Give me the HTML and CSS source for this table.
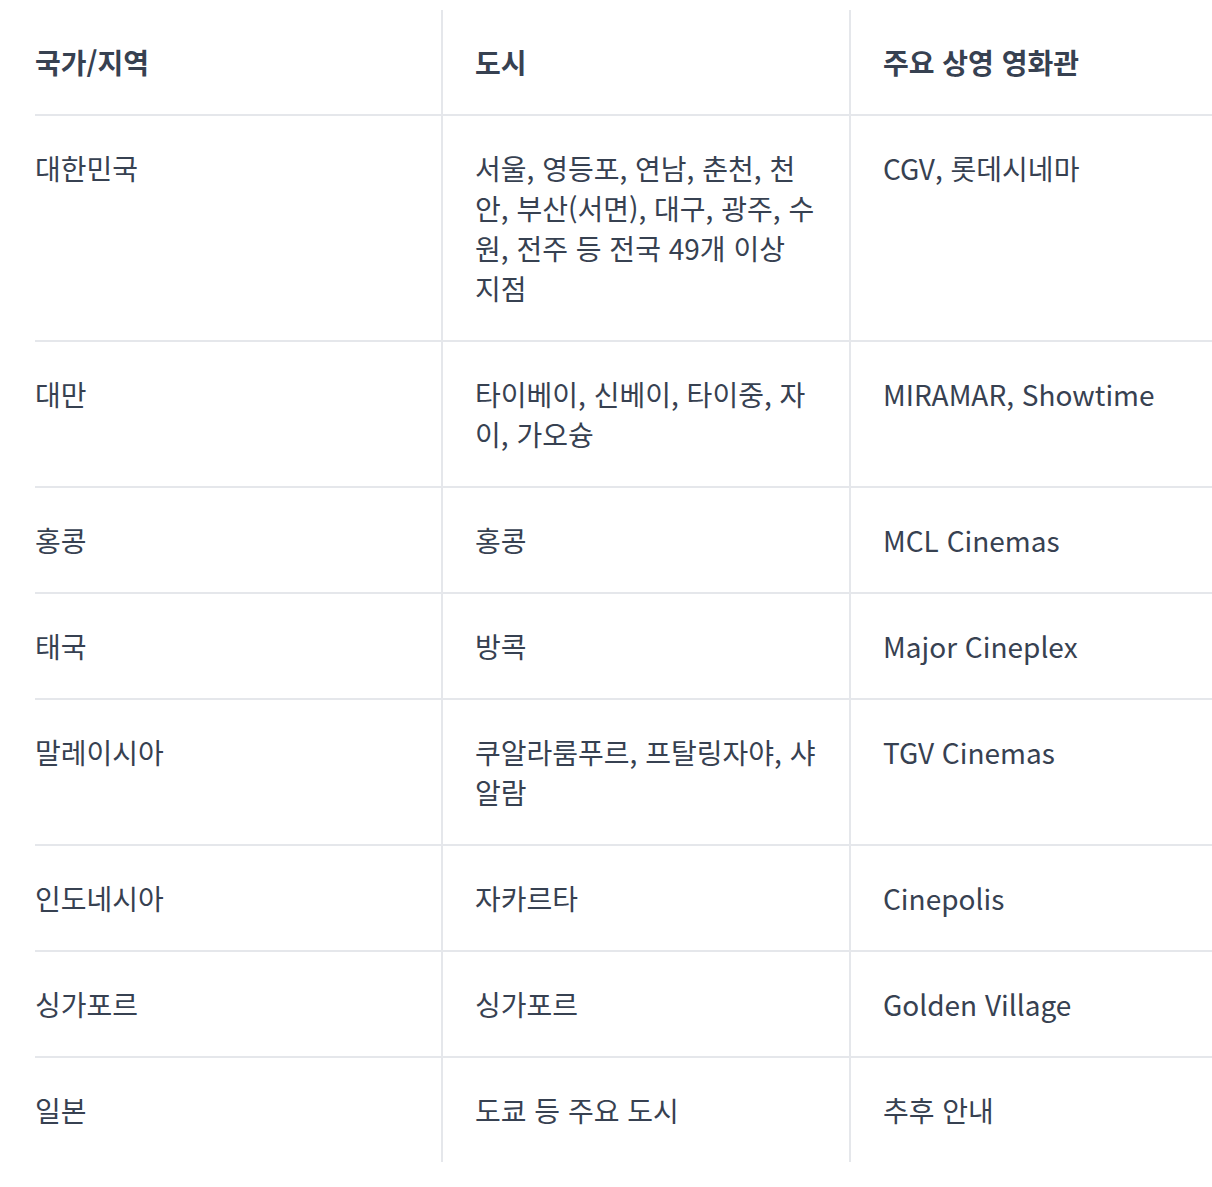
FILE: index.html
```html
<!DOCTYPE html>
<html lang="ko">
<head>
<meta charset="utf-8">
<link rel="stylesheet" href="styles.css">
</head>
<body>
<div class="wrap">
<table class="cinemas">
<colgroup><col class="c1"><col class="c2"><col class="c3"></colgroup>
<thead>
<tr><th>국가/지역</th><th>도시</th><th>주요 상영 영화관</th></tr>
</thead>
<tbody>
<tr><td>대한민국</td><td>서울, 영등포, 연남, 춘천, 천안, 부산(서면), 대구, 광주, 수원, 전주 등 전국 49개 이상 지점</td><td>CGV, 롯데시네마</td></tr>
<tr><td>대만</td><td>타이베이, 신베이, 타이중, 자이, 가오슝</td><td>MIRAMAR, Showtime</td></tr>
<tr><td>홍콩</td><td>홍콩</td><td>MCL Cinemas</td></tr>
<tr><td>태국</td><td>방콕</td><td>Major Cineplex</td></tr>
<tr><td>말레이시아</td><td>쿠알라룸푸르, 프탈링자야, 샤알람</td><td>TGV Cinemas</td></tr>
<tr><td>인도네시아</td><td>자카르타</td><td>Cinepolis</td></tr>
<tr><td>싱가포르</td><td>싱가포르</td><td>Golden Village</td></tr>
<tr><td>일본</td><td>도쿄 등 주요 도시</td><td>추후 안내</td></tr>
</tbody>
</table>
</div>
</body>
</html>
```
FILE: styles.css
```css
html, body {
  margin: 0;
  padding: 0;
  background: #ffffff;
}
body {
  font-family: "Noto Sans CJK KR", "Noto Sans", sans-serif;
  color: #374151;
  overflow: hidden;
}
.wrap {
  width: 1212px;
  padding: 10px 0 0 35px;
  box-sizing: border-box;
  overflow: hidden;
}
.cinemas {
  width: 1177px;
  table-layout: fixed;
  border-collapse: collapse;
  font-size: 28px;
  line-height: 40px;
}
.c1 { width: 407px; }
.c2 { width: 408px; }
.c3 { width: 362px; }
.cinemas th,
.cinemas td {
  padding: 32px 32px;
  text-align: left;
  vertical-align: top;
  border-left: 2px solid #e5e7eb;
}
.cinemas th:first-child,
.cinemas td:first-child {
  padding-left: 0;
  border-left: none;
}
.cinemas th {
  font-weight: 700;
  color: #374151;
}
.cinemas thead tr,
.cinemas tbody tr {
  border-bottom: 2px solid #e5e7eb;
}
.cinemas tbody tr:last-child {
  border-bottom: none;
}
```
